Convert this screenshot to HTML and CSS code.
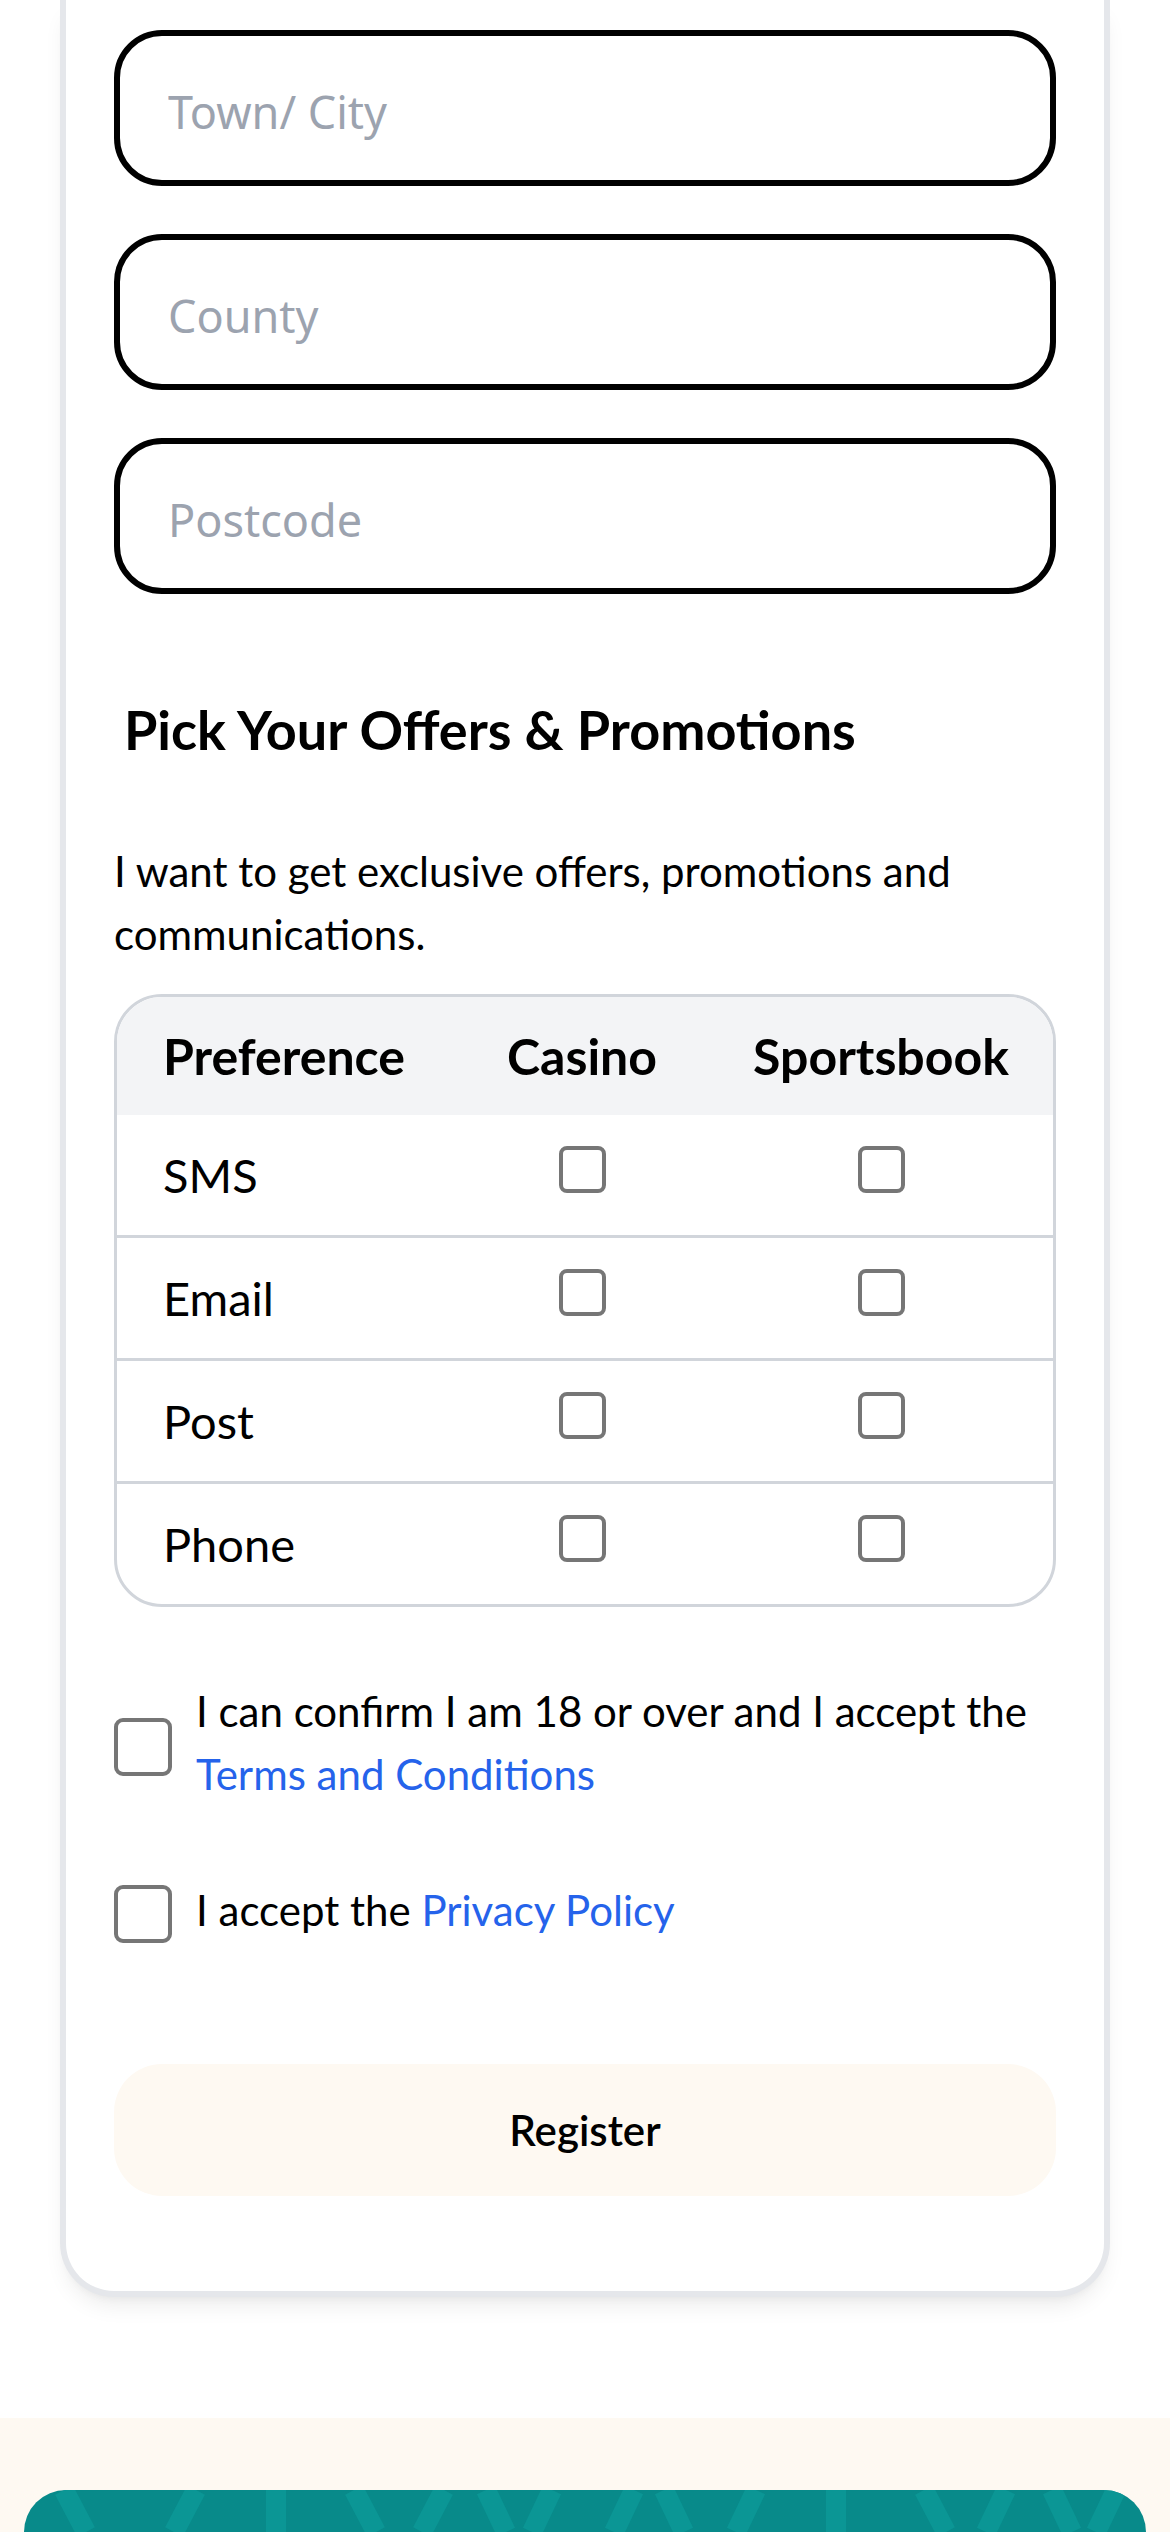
FILE: index.html
```html
<!DOCTYPE html>
<html lang="en">
<head>
  <meta charset="UTF-8" />
  <meta name="viewport" content="width=device-width, initial-scale=1.0"/>
  <title>Register</title>
  <link rel="stylesheet" href="styles.css">
</head>
<body>

  <!-- Registration card (address part onwards) -->
  <div class="card">
    <div class="fields">
      <input type="text" placeholder="Town/ City">
      <input type="text" placeholder="County">
      <input type="text" placeholder="Postcode">
    </div>

    <h2>Pick Your Offers &amp; Promotions</h2>
    <p class="intro">I want to get exclusive offers, promotions and communications.</p>

    <!-- Marketing preferences -->
    <div class="prefs">
      <table>
        <colgroup>
          <col class="col-name">
          <col class="col-casino">
          <col class="col-sports">
        </colgroup>
        <thead>
          <tr>
            <th class="name">Preference</th>
            <th>Casino</th>
            <th>Sportsbook</th>
          </tr>
        </thead>
        <tbody>
          <tr>
            <td class="name">SMS</td>
            <td><input type="checkbox" class="box"></td>
            <td><input type="checkbox" class="box"></td>
          </tr>
          <tr>
            <td class="name">Email</td>
            <td><input type="checkbox" class="box"></td>
            <td><input type="checkbox" class="box"></td>
          </tr>
          <tr>
            <td class="name">Post</td>
            <td><input type="checkbox" class="box"></td>
            <td><input type="checkbox" class="box"></td>
          </tr>
          <tr>
            <td class="name">Phone</td>
            <td><input type="checkbox" class="box"></td>
            <td><input type="checkbox" class="box"></td>
          </tr>
        </tbody>
      </table>
    </div>

    <label class="agree">
      <input type="checkbox" class="box big">
      <span>I can confirm I am 18 or over and I accept the <a href="#">Terms and Conditions</a></span>
    </label>

    <label class="agree second">
      <input type="checkbox" class="box big">
      <span>I accept the <a href="#">Privacy Policy</a></span>
    </label>

    <button class="register">Register</button>
  </div>

  <!-- Footer -->
  <div class="footer">
    <div class="footer-panel">
      <svg class="pattern" viewBox="0 0 1122 42" preserveAspectRatio="none">
        <g fill="none" stroke="#0b9695" stroke-width="20">
          <line x1="40" y1="0" x2="62" y2="42"/>
          <polyline points="172,0 150,42"/>
          <line x1="252" y1="0" x2="252" y2="42"/>
          <polyline points="330,0 352,42"/>
          <line x1="420" y1="0" x2="398" y2="42"/>
          <polyline points="462,0 482,42"/>
          <polyline points="528,0 508,42"/>
          <line x1="610" y1="0" x2="590" y2="42"/>
          <line x1="640" y1="0" x2="660" y2="42"/>
          <polyline points="732,0 712,42"/>
          <line x1="812" y1="0" x2="812" y2="42"/>
          <polyline points="900,0 922,42"/>
          <line x1="982" y1="0" x2="962" y2="42"/>
          <polyline points="1028,0 1048,42"/>
          <polyline points="1092,0 1072,42"/>
        </g>
      </svg>
    </div>
  </div>

</body>
</html>
```

FILE: styles.css
```css
body {
  margin: 0;
  background: #fff;
  font-family: Lato, "Noto Sans", sans-serif;
  color: #000;
}
.card {
  margin: 0 60px 121px;
  padding: 30px 48px 95px;
  background: #fff;
  border: 6px solid #e5e7eb;
  border-top: none;
  border-radius: 0 0 54px 54px;
  box-shadow: 0 14px 22px -6px rgba(0,0,0,0.08), 0 6px 10px -6px rgba(0,0,0,0.06);
}
.fields {
  display: flex;
  flex-direction: column;
  gap: 48px;
}
.fields input {
  display: block;
  box-sizing: border-box;
  width: 100%;
  height: 156px;
  margin: 0;
  padding: 6px 48px 0;
  border: 6px solid #000;
  border-radius: 48px;
  font-family: "Noto Sans", sans-serif;
  font-size: 45px;
  color: #111;
  outline: none;
}
.fields input::placeholder {
  color: #9ca3af;
}
h2 {
  margin: 100px 0 0;
  padding-left: 10px;
  font-size: 54px;
  line-height: 72px;
  font-weight: 700;
}
.intro {
  margin: 74px 0 28px;
  font-size: 42px;
  line-height: 63px;
}
.prefs {
  border: 3px solid #d1d5db;
  border-radius: 48px;
  overflow: hidden;
}
table {
  width: 100%;
  border-collapse: separate;
  border-spacing: 0;
  table-layout: fixed;
}
.col-name {
  width: 338px;
}
.col-casino {
  width: 254px;
}
.col-sports {
  width: 344px;
}
th {
  background: #f3f4f6;
  padding: 23px 0;
  font-size: 50px;
  line-height: 72px;
  font-weight: 700;
  text-align: center;
}
td {
  padding: 24px 0;
  font-size: 47px;
  line-height: 72px;
  text-align: center;
}
tbody tr + tr td {
  border-top: 3px solid #d1d5db;
}
th.name, td.name {
  text-align: left;
  padding-left: 46px;
}
.box {
  -webkit-appearance: none;
  appearance: none;
  box-sizing: border-box;
  width: 47px;
  height: 47px;
  margin: 0;
  border: 4px solid #767676;
  border-radius: 8px;
  background: #fff;
  vertical-align: baseline;
}
.box.big {
  flex: none;
  width: 58px;
  height: 58px;
  border-radius: 9px;
  margin-top: 8px;
}
.agree {
  display: flex;
  align-items: center;
  gap: 24px;
  margin-top: 73px;
  font-size: 42px;
  line-height: 63px;
}
.agree.second {
  margin-top: 71px;
}
.agree a {
  color: #2563eb;
  text-decoration: none;
}
.register {
  display: block;
  width: 100%;
  height: 132px;
  margin-top: 121px;
  border: none;
  border-radius: 48px;
  background: #fef9f2;
  font-family: Lato, sans-serif;
  font-size: 42px;
  font-weight: 600;
  color: #000;
  cursor: pointer;
}
.footer {
  background: #fef9f2;
  padding: 72px 24px 0;
}
.footer-panel {
  height: 42px;
  border-radius: 48px 48px 0 0;
  background: #088a8a;
  overflow: hidden;
}
.pattern {
  display: block;
  width: 100%;
  height: 100%;
}
```
